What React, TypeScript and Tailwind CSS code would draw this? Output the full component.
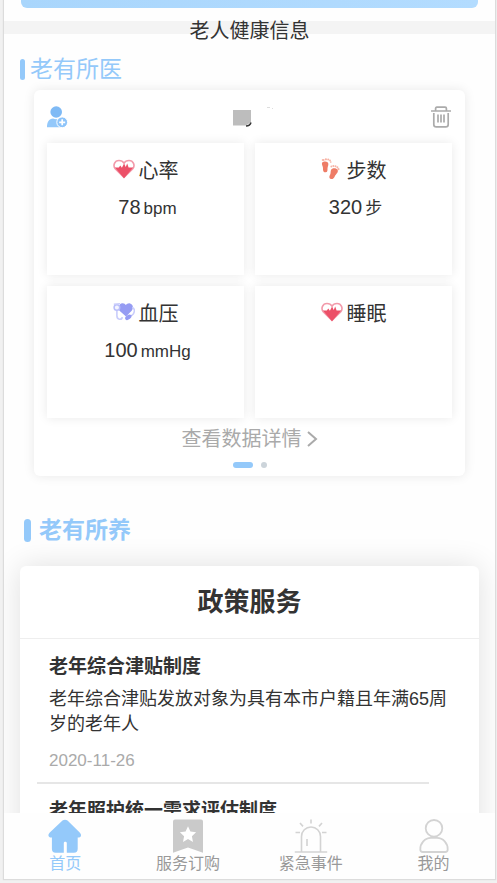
import type { ReactNode } from "react";

function HeartRateIcon() {
  return (
    <svg viewBox="0 0 22 20" className="mb-1 h-5 w-[22px]" aria-hidden="true">
      <path d="M11 18.500 2.200 9.800C-.4 6.400 1.600 1.500 6 1.500c2.200 0 4 1 5 2.700C12 2.500 13.800 1.500 16 1.500c4.400 0 6.400 4.900 3.800 8.300Z" fill="#fff" stroke="#f29aaa" strokeWidth="1.600" />
      <path d="M1.800 8.400h4l1.500-2 1.600 2.400 2.200-4.400 1.600 3.600 1.500-3.600 1.400 4h4.700L11 19.200Z" fill="#ec5068" />
    </svg>
  );
}

function FootprintsIcon() {
  return (
    <svg viewBox="0 0 22 22" className="mb-1 h-[22px] w-[22px]" aria-hidden="true">
      <g fill="#ee7c66">
        <path d="M1 4.800C2.800 2.700 6.900 3 7.300 5.600c.3 1.800-.7 3-.8 4.800 0 1.600.2 3.600-1.900 3.900-2.500.2-2.700-2.400-2.600-4.300C2 8.200.5 6.700 1 4.800Z" />
        <path d="M10 12c1-2.400 5.600-2.200 6.700.1.700 1.800-.6 3.300-1.900 4.600-1.300 1.400-1.600 4.300-4 4.300-2.800.1-2.800-2.400-1.800-4 .9-1.600.4-3.300 1-5Z" />
      </g>
      <g fill="#f7b3a5">
        <ellipse cx="2.200" cy="2" rx="1.500" ry="1.100" />
        <circle cx="4.900" cy="1.300" r="1.100" />
        <circle cx="7.200" cy="1.500" r="1" />
        <circle cx="9" cy="2.500" r=".9" />
        <circle cx="9.800" cy="4.100" r=".8" />
        <circle cx="10.300" cy="8.500" r=".9" />
        <circle cx="12.300" cy="8" r="1" />
        <circle cx="14.500" cy="8.300" r="1" />
        <circle cx="16.400" cy="9.300" r="1" />
        <circle cx="17.400" cy="11.200" r="1.100" />
      </g>
    </svg>
  );
}

function BloodPressureIcon() {
  return (
    <svg viewBox="0 0 22 20" className="mb-1 h-5 w-[22px]" aria-hidden="true">
      <path d="M13 14.500 6.500 8.700c-1.800-2.500-.7-7 2.700-7.500 1.700-.2 2.900.6 3.700 1.900 1-1.400 2.500-2.200 4.100-1.700 3.400.9 3.600 4.700 1.700 7.300Z" fill="#969cf3" />
      <g fill="none" stroke="#c9cdfb" strokeWidth="1.600">
        <path d="M3.900 8.500v5.300c0 4.400 5 4.300 5.400 1.300M19 5.500c2.800.3 2.900 3.900 1.400 6.300-1.500 2.300-4 2.200-5.600 3.200" />
      </g>
      <circle cx="3.900" cy="5.500" r="2.800" fill="#f4f5ff" stroke="#b9befa" strokeWidth="1.500" />
      <path d="M.8 2.300 7 1.600" stroke="#c9cdfb" strokeWidth="1.400" />
      <ellipse cx="15.300" cy="15.300" rx="3.500" ry="2.200" transform="rotate(-35 15.300 15.300)" fill="#969cf3" />
    </svg>
  );
}

function AddPersonIcon() {
  return (
    <svg viewBox="0 0 21 22" className="h-[22px] w-[21px]" aria-hidden="true">
      <circle cx="9.200" cy="6" r="5.800" fill="#7fbaf5" />
      <path d="M0 21.300c0-5.200 2-8.900 6.100-8.900 1.700 1 4.400 1 6.100 0 2.600.3 4.200 2 5 4.600v4.300H0Z" fill="#93c8fa" />
      <circle cx="15.200" cy="16.300" r="5.400" fill="#8dc4fa" stroke="#fff" strokeWidth="1" />
      <path d="M12.200 16.300h6M15.200 13.300v6" stroke="#fff" strokeWidth="1.700" />
    </svg>
  );
}

function TrashIcon() {
  return (
    <svg viewBox="0 0 22 22" className="h-[22px] w-[22px]" fill="none" stroke="#ababab" strokeWidth="1.700" aria-hidden="true">
      <path d="M1 5h20M5.600 5V2.500c0-.9.400-1.300 1.300-1.300h8.200c.9 0 1.300.4 1.300 1.300V5M3.800 7v11.500c0 1.700.7 2.400 2.400 2.400h9.600c1.700 0 2.400-.7 2.400-2.400V7M8 8.500v8M11 8.500v8M14 8.500v8" />
    </svg>
  );
}

function HomeIcon() {
  return (
    <svg viewBox="0 0 34 34" className="h-[34px] w-[34px]" aria-hidden="true">
      <path d="M14.500 1.600c1.500-1.300 3.500-1.300 5 0l12.200 12c1.500 1.600 1.700 3.300.8 4.200-.8.800-2.200.8-2.800.8v11.200c0 2.700-1.200 3.900-3.800 3.900h-7.100V24c0-1.700-3-1.700-3 0v9.700H7.700c-2.600 0-3.800-1.200-3.800-3.900V18.600c-1.100.1-2.200-.1-2.900-.8-1-1-.7-2.600.8-4.200Z" fill="#94c9fa" />
    </svg>
  );
}

function BookmarkIcon() {
  return (
    <svg viewBox="0 0 34 34" className="h-[34px] w-[34px]" aria-hidden="true">
      <path d="M4 .5h26q2 0 2 2v31.300L17 28.500 2 33.800V2.500q0-2 2-2Z" fill="#cacaca" />
      <path d="m17 7.200 2.400 5.300 5.700.7-4.200 4 1.100 5.700-5-2.800-5 2.800 1.100-5.700-4.200-4 5.700-.7Z" fill="#fff" />
    </svg>
  );
}

function AlarmIcon() {
  return (
    <svg viewBox="0 0 34 34" className="h-[34px] w-[34px]" fill="none" stroke="#d3d3d3" strokeWidth="1.600" aria-hidden="true">
      <path d="M.8 33h32.400M7.500 33V17.500a9.500 9.500 0 0 1 19 0V33M13 20v7M17 .5v4M6 4l3 3.400M28 4l-3 3.400M1.500 13.500H6M28 13.500h4.500" />
    </svg>
  );
}

function PersonIcon() {
  return (
    <svg viewBox="0 0 34 34" className="h-[34px] w-[34px]" fill="none" stroke="#d3d3d3" strokeWidth="1.800" aria-hidden="true">
      <circle cx="17" cy="9.300" r="8.300" />
      <path d="M3.300 30.500c-.3-6.300 4.700-11.700 10.700-11.700h6c6 0 11 5.400 10.700 11.700 0 1.500-1 2.500-2.600 2.500H5.900c-1.600 0-2.600-1-2.600-2.500Z" />
    </svg>
  );
}

type MetricProps = { icon: ReactNode; name: string; value?: string; unit?: string };

function Metric({ icon, name, value, unit }: MetricProps) {
  return (
    <section className="h-[132px] bg-white pt-3 text-center shadow-[0_0_10px_rgba(0,0,0,0.09)]">
      <h3 className="flex items-center justify-center gap-1 text-xl leading-8">
        {icon}
        {name}
      </h3>
      {value && (
        <p className="mt-1 flex items-baseline justify-center gap-[3px] pl-1 text-xl leading-8">
          {value}
          <span className="text-[17px]">{unit}</span>
        </p>
      )}
    </section>
  );
}

const tabs = [
  { label: "首页", icon: <HomeIcon />, active: true },
  { label: "服务订购", icon: <BookmarkIcon />, active: false },
  { label: "紧急事件", icon: <AlarmIcon />, active: false },
  { label: "我的", icon: <PersonIcon />, active: false },
];

export default function App() {
  return (
    <div className="h-screen bg-[#f1f1f1] pr-0.5 pb-1 pl-1 font-['Liberation_Sans','Noto_Sans_CJK_SC',sans-serif] text-[#333]">
      <div className="flex h-full flex-col bg-[#fefefe] shadow-[0_0_1px_1px_#dcdcdc]">
        <main className="min-h-0 flex-1 overflow-x-hidden overflow-y-auto [scrollbar-width:none]">
          <div className="mx-[17px] h-2 rounded-b-md bg-linear-to-r from-[#a9d6fc] to-[#b3dcff]" />
          <div className="mt-[13px] h-[13px] bg-[#f4f4f4]">
            <h1 className="text-center text-xl leading-5">老人健康信息</h1>
          </div>

          <h2 className="mt-[19px] ml-4 flex items-center gap-[5px] text-[23px] leading-8 text-[#94c9fa]">
            <span className="h-[21px] w-[5px] rounded-full bg-[#94c9fa]" />
            老有所医
          </h2>

          <section className="mx-[30px] mt-[5px] rounded-md bg-white px-[13px] pb-2 shadow-[0_0_12px_rgba(0,0,0,0.09)]">
            <header className="flex h-[53px] items-center justify-between">
              <button type="button" aria-label="添加老人">
                <AddPersonIcon />
              </button>
              <svg viewBox="0 0 48 24" className="h-6 w-12" aria-hidden="true">
                <path d="M8 5h18v12l-5 3.500H8Z" fill="#bdbdbd" />
                <path d="M21 21q4 0 5-3.500" fill="none" stroke="#333" strokeWidth="1.500" />
                <path d="M42 2.500h3M47 3l1 1" stroke="#ddd" />
              </svg>
              <button type="button" aria-label="删除">
                <TrashIcon />
              </button>
            </header>
            <div className="grid grid-cols-2 gap-[11px]">
              <Metric icon={<HeartRateIcon />} name="心率" value="78" unit="bpm" />
              <Metric icon={<FootprintsIcon />} name="步数" value="320" unit="步" />
              <Metric icon={<BloodPressureIcon />} name="血压" value="100" unit="mmHg" />
              <Metric icon={<HeartRateIcon />} name="睡眠" />
            </div>
            <a href="#details" className="mt-[5px] flex items-center justify-center gap-1 text-xl leading-8 text-[#aaa]">
              查看数据详情
              <svg viewBox="0 0 12 18" className="h-[18px] w-3" fill="none" stroke="#aaa" strokeWidth="2" aria-hidden="true">
                <path d="m2 2 8 7-8 7" />
              </svg>
            </a>
            <div className="mt-[7px] flex items-center justify-center gap-2">
              <span className="h-1.5 w-5 rounded-full bg-[#94c9fa]" />
              <span className="h-1.5 w-1.5 rounded-full bg-[#ccd4da]" />
            </div>
          </section>

          <h2 className="mt-[38px] ml-5 flex items-center gap-2 text-[23px] leading-8 font-bold text-[#94c9fa]">
            <span className="h-[23px] w-[7px] rounded-full bg-[#94c9fa]" />
            老有所养
          </h2>

          <section className="mx-4 mt-5 rounded-md bg-white shadow-[0_0_30px_rgba(0,0,0,0.12)]">
            <h3 className="border-b border-[#eee] text-center text-[26px] leading-[72px] font-bold">政策服务</h3>
            <article className="px-[29px] pt-3">
              <h4 className="text-[19px] leading-8 font-bold">老年综合津贴制度</h4>
              <p className="mt-1 text-lg leading-[25px]">老年综合津贴发放对象为具有本市户籍且年满65周岁的老年人</p>
              <time className="mt-3 block text-[17px] leading-6 text-[#aaa]">2020-11-26</time>
            </article>
            <hr className="mt-[9px] mr-[50px] ml-[17px] border-t-2 border-[#e6e6e6]" />
            <article className="px-[29px] pt-[11px] pb-4">
              <h4 className="text-[19px] leading-8 font-bold">老年照护统一需求评估制度</h4>
            </article>
          </section>
        </main>

        <nav className="grid h-[66px] shrink-0 grid-cols-4 bg-[#fefefe]">
          {tabs.map((tab) => (
            <a
              key={tab.label}
              href={"#" + tab.label}
              className={
                "flex flex-col items-center pt-1.5 text-base leading-[22px] " +
                (tab.active ? "text-[#94c9fa]" : "text-[#999]")
              }
            >
              {tab.icon}
              {tab.label}
            </a>
          ))}
        </nav>
      </div>
    </div>
  );
}
